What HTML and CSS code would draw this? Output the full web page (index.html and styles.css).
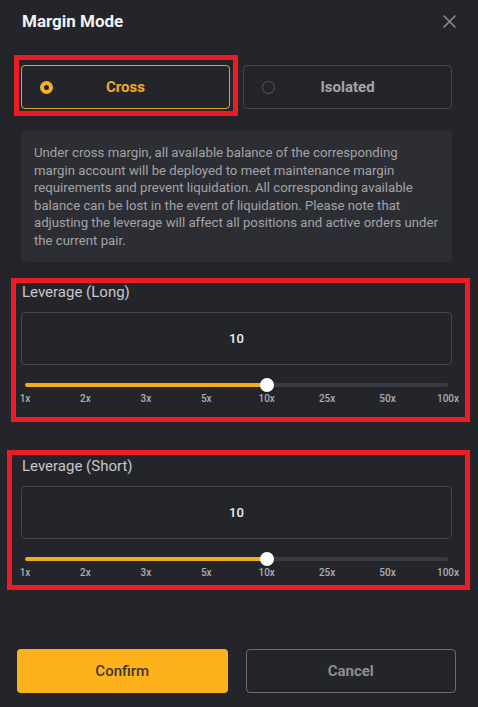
FILE: index.html
```html
<!DOCTYPE html>
<html lang="en">
<head>
<meta charset="utf-8">
<title>Margin Mode</title>
<link rel="stylesheet" href="styles.css">
</head>
<body>
<div class="modal">
  <header class="head">
    <h1 class="title">Margin Mode</h1>
    <button class="close" aria-label="Close">
      <svg width="13" height="13" viewBox="0 0 13 13"><path d="M1 1L12 12M12 1L1 12" stroke="#8b8c91" stroke-width="1.6" stroke-linecap="round" fill="none"/></svg>
    </button>
  </header>

  <div class="modes">
    <button class="mode active"><span class="radio"></span><span class="mode-label">Cross</span><span></span></button>
    <button class="mode"><span class="radio"></span><span class="mode-label">Isolated</span><span></span></button>
  </div>

  <p class="info">Under cross margin, all available balance of the corresponding<br>margin account will be deployed to meet maintenance margin<br>requirements and prevent liquidation. All corresponding available<br>balance can be lost in the event of liquidation. Please note that<br>adjusting the leverage will affect all positions and active orders under<br>the current pair.</p>

  <section class="lev">
    <div class="lev-label">Leverage (Long)</div>
    <div class="lev-input">10</div>
    <div class="slider">
      <div class="track">
        <div class="fill" style="width:57.14%"></div>
        <div class="thumb" style="left:57.14%"></div>
      </div>
    </div>
    <div class="ticks"><span>1x</span><span>2x</span><span>3x</span><span>5x</span><span>10x</span><span>25x</span><span>50x</span><span>100x</span></div>
  </section>

  <section class="lev lev-short">
    <div class="lev-label">Leverage (Short)</div>
    <div class="lev-input">10</div>
    <div class="slider">
      <div class="track">
        <div class="fill" style="width:57.14%"></div>
        <div class="thumb" style="left:57.14%"></div>
      </div>
    </div>
    <div class="ticks"><span>1x</span><span>2x</span><span>3x</span><span>5x</span><span>10x</span><span>25x</span><span>50x</span><span>100x</span></div>
  </section>

  <div class="actions">
    <button class="btn confirm">Confirm</button>
    <button class="btn cancel">Cancel</button>
  </div>

  <div class="mark mark-1"></div>
  <div class="mark mark-2"></div>
  <div class="mark mark-3"></div>
</div>
</body>
</html>
```

FILE: styles.css
```css
* { box-sizing: border-box; }
html, body { margin: 0; padding: 0; }
body {
  background: #24252a;
  font-family: Roboto, "Liberation Sans", sans-serif;
  color: #fff;
  width: 478px;
  height: 707px;
  overflow: hidden;
}
.modal {
  position: relative;
  padding: 9px 26px 0 21px;
  height: 707px;
}
button {
  font-family: inherit;
  background: none;
  border: none;
  padding: 0;
  margin: 0;
  cursor: pointer;
}
.head {
  display: flex;
  justify-content: space-between;
  align-items: center;
  height: 24px;
}
.title {
  margin: 0 0 0 1px;
  font-size: 17px;
  line-height: 24px;
  font-weight: 700;
  color: #f2f2f3;
}
.close {
  width: 13px;
  height: 13px;
  display: flex;
  margin-right: -4px;
}
.modes {
  margin-top: 32px;
  display: grid;
  grid-template-columns: 1fr 1fr;
  gap: 13px;
}
.mode {
  height: 44px;
  border: 1px solid #45464c;
  border-radius: 4px;
  display: grid;
  grid-template-columns: 1fr auto 1fr;
  align-items: center;
  padding: 0 0 0 18px;
  color: #a4a5aa;
  font-size: 15px;
  font-weight: 700;
}
.mode.active {
  border-color: #e6a21f;
  color: #f3a92a;
}
.radio {
  justify-self: start;
  width: 13px;
  height: 13px;
  border-radius: 50%;
  border: 1px solid #56575c;
}
.mode.active .radio {
  border: 4px solid #f8b020;
}
.mode-label { margin-left: -18px; }
.info {
  margin: 22px 0 0;
  background: #2d2e33;
  border-radius: 4px;
  padding: 13px 13px;
  font-size: 13.2px;
  line-height: 17.5px;
  color: #a2a3a8;
  white-space: nowrap;
}
.lev { margin-top: 20px; }
.lev-short { margin-top: 50px; }
.lev-label {
  font-size: 15px;
  line-height: 20px;
  color: #c6c7cb;
  padding-left: 1px;
}
.lev-input {
  margin-top: 10px;
  height: 53px;
  border: 1px solid #45464c;
  border-radius: 4px;
  display: flex;
  align-items: center;
  justify-content: center;
  font-size: 13px;
  font-weight: 500;
  color: #f0f0f1;
}
.slider {
  margin-top: 13px;
  height: 14px;
  padding: 0 4px;
  display: flex;
  align-items: center;
}
.track {
  position: relative;
  flex: 1;
  height: 4px;
  border-radius: 2px;
  background: #3a3b40;
}
.fill {
  height: 100%;
  border-radius: 2px;
  background: #f6ab1d;
}
.thumb {
  position: absolute;
  top: 50%;
  width: 14px;
  height: 14px;
  border-radius: 50%;
  background: #fff;
  transform: translate(-50%, -50%);
}
.ticks {
  display: grid;
  grid-template-columns: repeat(8, 1fr);
  width: calc((100% - 8px) * 8 / 7);
  margin-left: calc(4px - (100% - 8px) / 14);
  font-size: 10px;
  line-height: 14px;
  font-weight: 500;
  color: #aeafb3;
  text-align: center;
}
.actions {
  margin: 69px -4px 0 -4px;
  display: grid;
  grid-template-columns: 1fr 1fr;
  gap: 18px;
}
.btn {
  height: 44px;
  border-radius: 4px;
  font-size: 15px;
  font-weight: 500;
}
.confirm {
  background: #fdb21c;
  color: #3d3723;
}
.cancel {
  border: 1px solid #6c6d72;
  color: #8c8d92;
  font-weight: 700;
}
.mark {
  position: absolute;
  border: 5px solid #ed1c24;
  pointer-events: none;
}
.mark-1 { left: 14px; top: 55px; width: 224px; height: 61px; }
.mark-2 { left: 11px; top: 278px; width: 459px; height: 144px; }
.mark-3 { left: 7px; top: 450px; width: 463px; height: 140px; }
```
